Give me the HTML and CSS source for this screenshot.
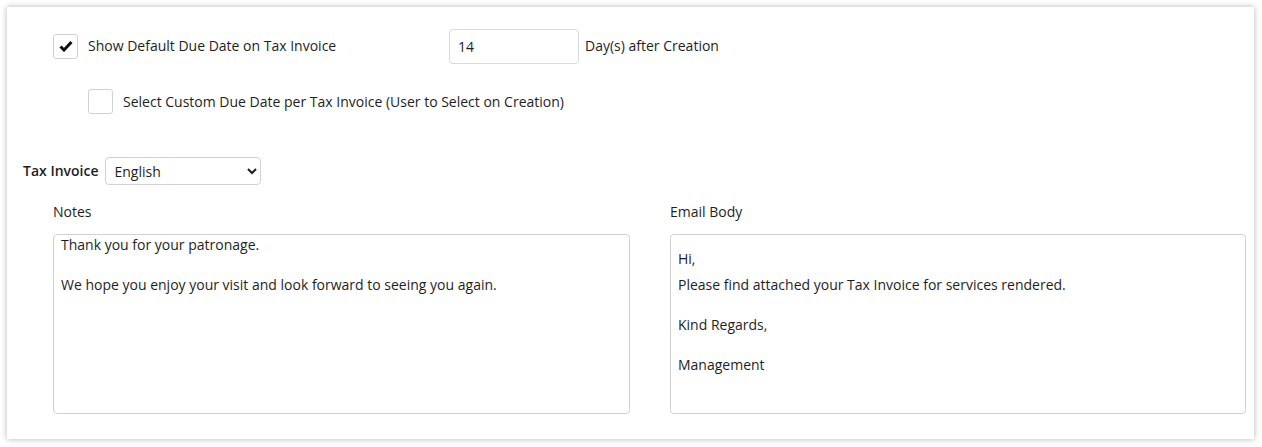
FILE: index.html
```html
<!DOCTYPE html>
<html>
<head>
    <title>Tax Invoice Settings</title>
    <link rel="stylesheet" href="styles.css">
</head>
<body>
    <div class="card">
        <div class="due-row">
            <label class="check-label">
                <span class="check-box checked">
                    <svg width="14" height="12" viewBox="0 0 14 12"><path d="M1.5 6.5 L5 10 L12.5 2" fill="none" stroke="#111" stroke-width="3" stroke-linejoin="miter"/></svg>
                </span>
                <span>Show Default Due Date on Tax Invoice</span>
            </label>
            <input type="text" class="days-input" value="14">
            <span class="days-text">Day(s) after Creation</span>
        </div>

        <div class="custom-row">
            <label class="check-label">
                <span class="check-box"></span>
                <span>Select Custom Due Date per Tax Invoice (User to Select on Creation)</span>
            </label>
        </div>

        <div class="lang-row">
            <label for="language" class="lang-label">Tax Invoice</label>
            <select id="language" class="lang-select">
                <option>English</option>
            </select>
        </div>

        <div class="text-grid">
            <div class="field">
                <div class="field-label">Notes</div>
                <div class="text-box notes">
                    <div>Thank you for your patronage.</div>
                    <div>&nbsp;</div>
                    <div>We hope you enjoy your visit and look forward to seeing you again.</div>
                </div>
            </div>
            <div class="field">
                <div class="field-label">Email Body</div>
                <div class="text-box email">
                    <p class="first">Hi,</p>
                    <p class="near">Please find attached your Tax Invoice for services rendered.</p>
                    <p>Kind Regards,</p>
                    <p>Management</p>
                </div>
            </div>
        </div>
    </div>
</body>
</html>
```

FILE: styles.css
```css
body {
    margin: 0;
    padding: 7px 8px 8px 7px;
    background: #fff;
    font-family: "Open Sans", Arial, sans-serif;
    font-size: 14px;
    line-height: 20px;
    color: #1e1e1e;
}
.card {
    background: #fff;
    box-shadow: 0 0 6px rgba(0, 0, 0, 0.3);
    padding: 22px 9px 25px 16px;
    height: 432px;
    box-sizing: border-box;
}
.due-row {
    display: flex;
    align-items: center;
    height: 34px;
    margin-left: 30px;
}
.check-label {
    display: flex;
    align-items: center;
    gap: 10px;
}
.due-row .check-label {
    width: 396px;
}
.check-box {
    width: 23px;
    height: 23px;
    border: 1px solid #d2d2d2;
    border-radius: 3px;
    display: flex;
    align-items: center;
    justify-content: center;
    background: #fff;
}
.days-input {
    width: 130px;
    height: 35px;
    box-sizing: border-box;
    border: 1px solid #d9d9d9;
    border-radius: 4px;
    padding: 0 8px;
    font-family: inherit;
    font-size: 14px;
    color: #1e1e1e;
}
.days-text {
    margin-left: 6px;
}
.custom-row {
    margin: 26px 0 0 65px;
    height: 25px;
    display: flex;
    align-items: center;
}
.lang-row {
    display: flex;
    align-items: center;
    gap: 6px;
    margin-top: 43px;
}
.lang-label {
    font-weight: 600;
}
.lang-select {
    width: 156px;
    height: 28px;
    border: 1px solid #d2d2d2;
    border-radius: 4px;
    padding: 0 5px;
    font-family: inherit;
    font-size: 14px;
    color: #1e1e1e;
    background: #fff;
}
.text-grid {
    display: grid;
    grid-template-columns: 577px 576px;
    column-gap: 40px;
    margin: 17px 0 0 30px;
}
.field-label {
    line-height: 20px;
    margin-bottom: 12px;
}
.text-box {
    height: 180px;
    box-sizing: border-box;
    border: 1px solid #d2d2d2;
    border-radius: 4px;
    padding: 0 7px;
    line-height: 20px;
}
.text-box p {
    margin: 20px 0 0;
}
.text-box p.first {
    margin-top: 14px;
}
.text-box p.near {
    margin-top: 6px;
}
```
